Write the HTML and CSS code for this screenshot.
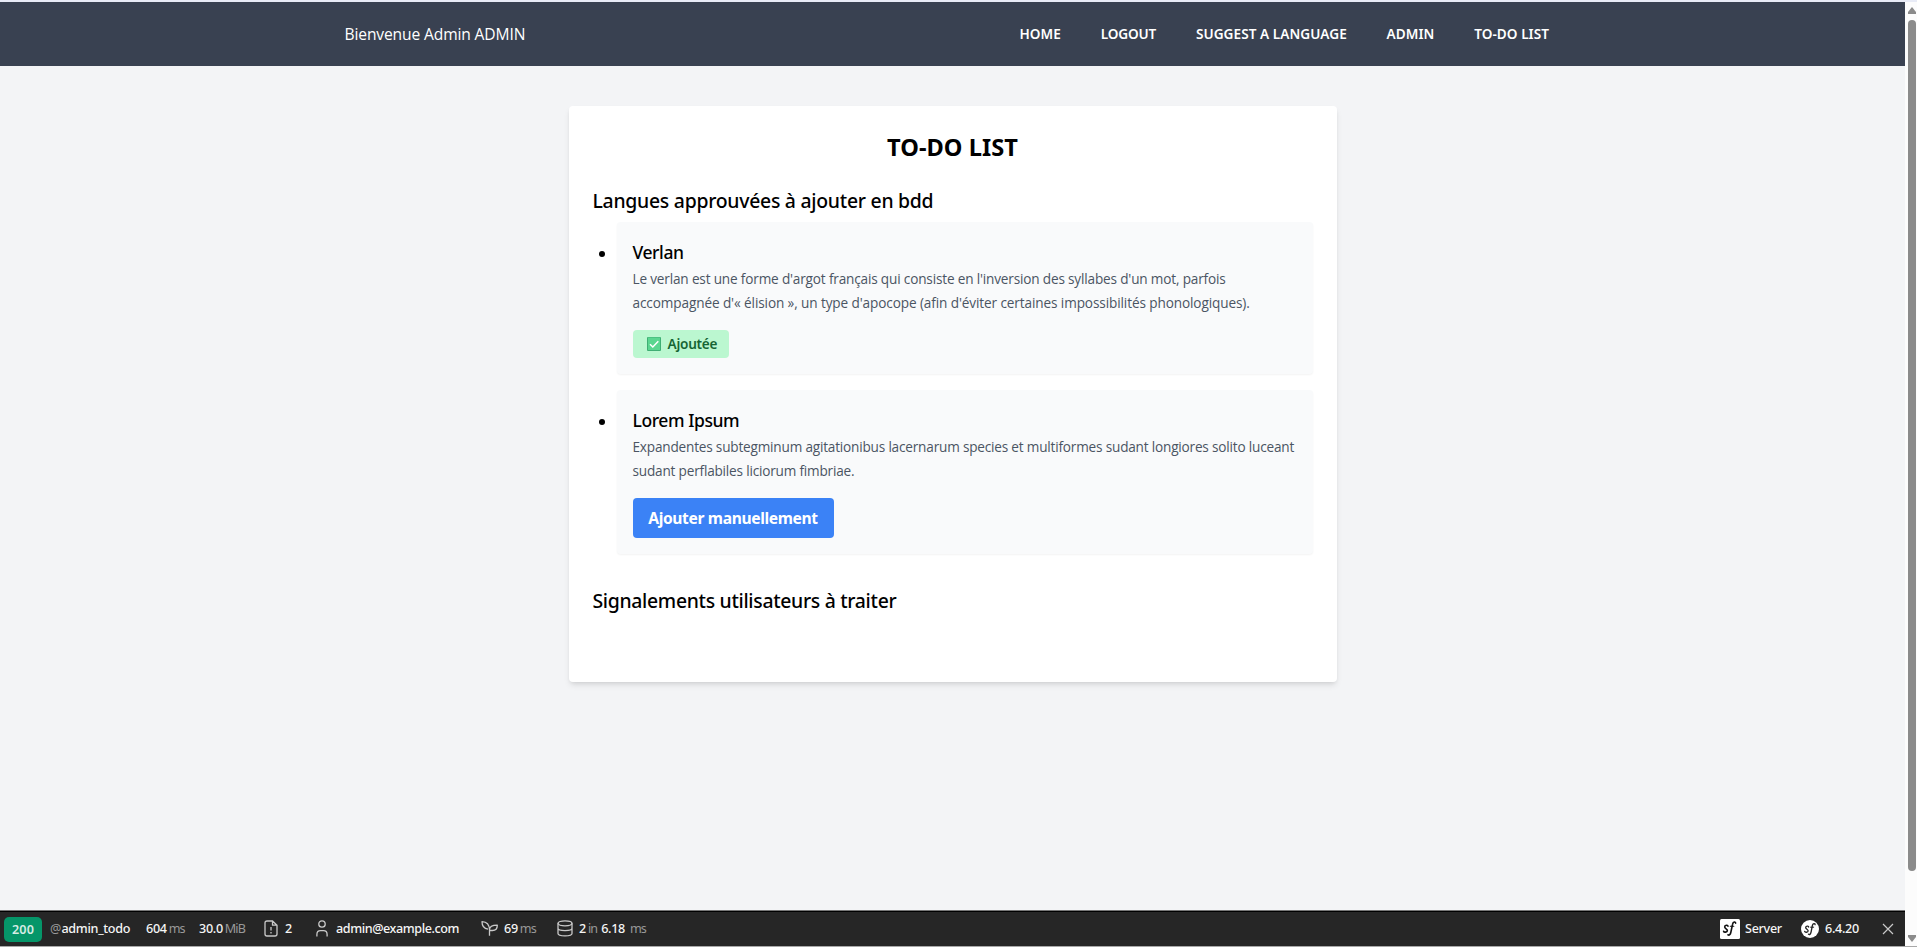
FILE: index.html
```html
<!DOCTYPE html>
<html lang="fr">
<head>
<meta charset="utf-8">
<title>To-do list</title>
<link rel="stylesheet" href="styles.css">
</head>
<body>
<div class="window">
  <div class="page">
    <header class="header">
      <p class="welcome">Bienvenue Admin ADMIN</p>
      <nav class="nav">
        <a>HOME</a><a>LOGOUT</a><a>SUGGEST A LANGUAGE</a><a>ADMIN</a><a>TO-DO LIST</a>
      </nav>
    </header>
    <main class="main">
      <section class="card">
        <h1 class="title">TO-DO LIST</h1>
        <h2 class="heading">Langues approuvées à ajouter en bdd</h2>
        <ul class="list">
          <li class="item">
            <span class="bullet"></span>
            <div class="box">
              <h3 class="name">Verlan</h3>
              <p class="text"><span class="l1">Le verlan est une forme d'argot français qui consiste en l'inversion des syllabes d'un mot, parfois</span><br><span class="l2">accompagnée d'« élision », un type d'apocope (afin d'éviter certaines impossibilités phonologiques).</span></p>
              <span class="badge">
                <svg width="14" height="14" viewBox="0 0 14 14"><rect width="14" height="14" rx="1" fill="#3fae74"/><rect x="1" y="0.500" width="12" height="12.500" fill="#5bd690"/><path d="M3 7.300 5.800 10 11.300 4.300" fill="none" stroke="#fff" stroke-width="1.500"/></svg>
                <span>Ajoutée</span>
              </span>
            </div>
          </li>
          <li class="item">
            <span class="bullet"></span>
            <div class="box">
              <h3 class="name">Lorem Ipsum</h3>
              <p class="text"><span class="l3">Expandentes subtegminum agitationibus lacernarum species et multiformes sudant longiores solito luceant</span><br><span class="l3">sudant perflabiles liciorum fimbriae.</span></p>
              <button class="button">Ajouter manuellement</button>
            </div>
          </li>
        </ul>
        <h2 class="heading reports">Signalements utilisateurs à traiter</h2>
      </section>
    </main>
    <footer class="toolbar">
      <div class="status">200</div>
      <div class="block route"><i>@</i><b>admin_todo</b></div>
      <div class="block time"><b>604</b><i>ms</i></div>
      <div class="block memory"><b>30.0</b><i>MiB</i></div>
      <div class="block logs">
        <svg width="14" height="17" viewBox="0 0 14 17" fill="none" stroke="#c9c9c9" stroke-width="1.3"><path d="M8.500 1H3Q1 1 1 3v11q0 2 2 2h8q2 0 2-2V5.200zM8.500 1v4.200H13"/><path d="M7 7v3.500M7 12v1.500"/></svg>
        <b>2</b>
      </div>
      <div class="block user">
        <svg width="12" height="17" viewBox="0 0 12 17" fill="none" stroke="#c9c9c9" stroke-width="1.3"><circle cx="6" cy="4" r="3.200"/><path d="M.9 16.500v-2q0-3.800 3.600-3.800h3q3.600 0 3.600 3.800v2"/></svg>
        <b>admin@example.com</b>
      </div>
      <div class="block twig">
        <svg width="17" height="17" viewBox="0 0 17 17" fill="none" stroke="#c9c9c9" stroke-width="1.300" stroke-linejoin="round"><path d="M8.500 15.800V9.800Q8.500 5.200 16.300 5.200 16.300 10.500 11.500 10.500H8.500M8.500 10Q8.300 1.900 1 1.700 1 8.300 7 9.200"/></svg>
        <b>69</b><i>ms</i>
      </div>
      <div class="block db">
        <svg width="16" height="17" viewBox="0 0 16 17" fill="none" stroke="#c9c9c9" stroke-width="1.3"><ellipse cx="8" cy="3.300" rx="7" ry="2.500"/><path d="M1 3.300v10.200c0 3.200 14 3.200 14 0V3.300M1 8.300c0 3 14 3 14 0"/></svg>
        <b>2</b><i>in</i><b>6.18</b><i class="unit">ms</i>
      </div>
      <div class="block server">
        <svg width="20" height="20" viewBox="0 0 20 20"><rect width="20" height="20" rx="1.500" fill="#fff"/><g fill="none" stroke="#111" stroke-linecap="round"><path stroke-width="1.600" d="M8 7.300C8 5.700 4.600 6 4.700 8c.1 1.800 2.900 1.900 2.700 3.700-.2 1.800-3.500 1.800-3.800.5"/><path stroke-width="1.600" d="M15.600 4.200c.2-1.700-2.500-1.600-3 1L10.900 13c-.5 2.700-1.700 3.600-3 2.800"/><path stroke-width="1.100" d="M10.300 7.200h3.500"/></g></svg>
        <span>Server</span>
      </div>
      <div class="block version">
        <svg width="18" height="18" viewBox="0 0 20 20"><circle cx="10" cy="10" r="10" fill="#fff"/><g fill="none" stroke="#222" stroke-linecap="round"><path stroke-width="1.500" d="M8.500 7.800C8.500 6.200 5.100 6.500 5.200 8.500c.1 1.800 2.900 1.900 2.700 3.700-.2 1.800-3.500 1.800-3.800.5"/><path stroke-width="1.500" d="M15.600 5.200c.2-1.700-2.500-1.600-3 1L11.300 13c-.5 2.700-1.700 3.600-3 2.800"/><path stroke-width="1.100" d="M10.600 8h3.500"/></g></svg>
        <span>6.4.20</span>
      </div>
      <svg class="close" width="12" height="12" viewBox="0 0 12 12" stroke="#c9c9c9" stroke-width="1.200"><path d="m1 1 10 10M11 1 1 11"/></svg>
    </footer>
  </div>
  <div class="scrollbar">
    <svg width="8" height="7" viewBox="0 0 8 7"><path d="M4 0 8 5v2H0V5z" fill="#8b8b8b"/></svg>
    <div class="thumb"></div>
    <svg width="8" height="7" viewBox="0 0 8 7"><path d="M0 0h8v2L4 7 0 2z" fill="#8b8b8b"/></svg>
  </div>
</div>
</body>
</html>
```
FILE: styles.css
```css
* { box-sizing: border-box; margin: 0; padding: 0; }
body { font-family: "Open Sans", "Noto Sans", sans-serif; color: #000; overflow: hidden; }
svg { display: block; flex: none; }

.window { display: flex; height: 947px; border-top: 2px solid #e8ebf6; border-bottom: 1px solid #a8a8a8; background: #fcfcfc; }
.page { display: flex; flex-direction: column; width: 1905px; background: #f3f4f6; }

.header { display: flex; align-items: center; justify-content: space-between; height: 64px; padding: 0 356px 0 344.500px; background: #394151; color: #fff; }
.welcome { font-size: 15.6px; letter-spacing: -0.13px; line-height: 24px; }
.nav { display: flex; gap: 39.800px; font: 600 13.600px/24px "Noto Sans", sans-serif; white-space: nowrap; }
.nav a { letter-spacing: 0.05px; }
.nav a:nth-child(2) { letter-spacing: -0.14px; }

.main { flex: 1; padding-top: 40px; }
.card { width: 768px; height: 576px; margin: 0 auto; padding: 24px; border-radius: 4px; background: #fff; box-shadow: 0 4px 6px -1px rgba(0,0,0,.1), 0 2px 4px -2px rgba(0,0,0,.1); }
.title { margin-bottom: 24px; padding-top: 1px; height: 32px; text-align: center; font: 700 23.600px/32px "Noto Sans", sans-serif; letter-spacing: 0.06px; }
.heading { height: 28px; padding-top: 1px; margin-bottom: 8px; font: 500 19.400px/28px "Noto Sans", sans-serif; letter-spacing: -0.26px; }
.reports { letter-spacing: -0.31px; }
.list { display: flex; flex-direction: column; gap: 16px; margin-bottom: 32px; list-style: none; }
.item { display: flex; }
.bullet { flex: none; width: 6px; height: 6px; margin: 29px 12px 0 6px; border-radius: 50%; background: #000; }
.box { flex: 1; padding: 16px; border-radius: 4px; background: #f9fafb; box-shadow: 0 1px 2px rgba(0,0,0,.05); }
.name { font: 500 17.500px/28px "Noto Sans", sans-serif; letter-spacing: -0.42px; }
.text { height: 48px; padding-top: 1px; margin-bottom: 16px; font-size: 13.600px; line-height: 24px; color: #4b5563; white-space: nowrap; }
.l1 { letter-spacing: -0.17px; }
.l2 { letter-spacing: -0.11px; }
.l3 { letter-spacing: -0.19px; }
.badge { display: flex; align-items: center; gap: 7px; width: 96px; height: 28px; padding-left: 14px; border-radius: 4px; background: #bbf7d0; color: #166534; font: 600 13.600px/28px "Noto Sans", sans-serif; letter-spacing: -0.24px; }
.button { display: block; width: 201px; height: 40px; border: 0; border-radius: 4px; background: #3b82f6; color: #fff; font: 700 15.600px/24px "Noto Sans", sans-serif; letter-spacing: -0.35px; }

.toolbar { display: flex; align-items: center; height: 36px; padding-left: 4px; border-top: 1px solid #777; background: #262626; box-shadow: inset 0 1px 0 #000; color: #f5f5f5; font: 500 12.600px/18px "Noto Sans", sans-serif; letter-spacing: -0.3px; }
.toolbar b { font-weight: 500; }
.toolbar i { font-style: normal; font-weight: 400; color: #999; letter-spacing: -0.9px; }
.status { width: 38px; height: 25px; margin-top: 2px; border-radius: 5px; background: #059669; color: #d5ece4; text-align: center; font-weight: 600; line-height: 25px; letter-spacing: 0.1px; }
.block { display: flex; align-items: center; flex: none; white-space: nowrap; }
.route { width: 96px; margin-left: 8px; gap: 1px; }
.time { width: 53px; gap: 2px; }
.memory { width: 65px; gap: 2px; }
.logs { width: 52px; gap: 7px; }
.user { width: 165px; gap: 8px; letter-spacing: -0.42px; }
.twig { width: 76px; gap: 6px; }
.twig i { margin-left: -4px; }
.db { gap: 6px; }
.db i { margin-left: -4px; }
.db b + i + b { margin-left: -2px; }
.db .unit { margin-left: -1px; }
.server { width: 81px; gap: 5px; margin-left: auto; }
.version { width: 81px; gap: 6px; }
.close { margin-right: 11px; }

.scrollbar { display: flex; flex-direction: column; align-items: center; width: 12px; padding: 5px 0 4px 2px; }
.thumb { width: 8px; height: 851px; margin: 6px 0 auto; border-radius: 4px; background: #8b8b8b; }
```
